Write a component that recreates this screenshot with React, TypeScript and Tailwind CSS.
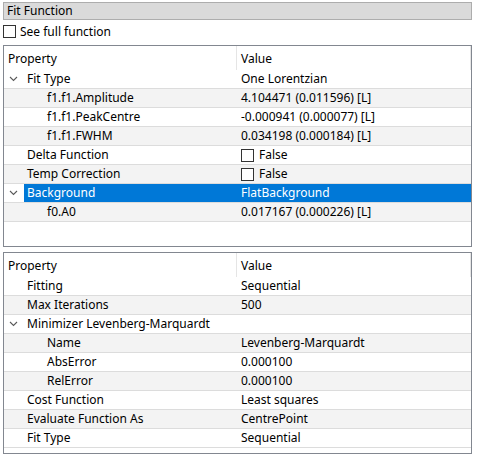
import React from "react";

type Row = {
  label: string;
  value?: string;
  level: number;
  expander?: boolean;
  check?: boolean;
  selected?: boolean;
};

const fitRows: Row[] = [
  { label: "Fit Type", value: "One Lorentzian", level: 0, expander: true },
  { label: "f1.f1.Amplitude", value: "4.104471 (0.011596) [L]", level: 1 },
  { label: "f1.f1.PeakCentre", value: "-0.000941 (0.000077) [L]", level: 1 },
  { label: "f1.f1.FWHM", value: "0.034198 (0.000184) [L]", level: 1 },
  { label: "Delta Function", value: "False", level: 0, check: true },
  { label: "Temp Correction", value: "False", level: 0, check: true },
  { label: "Background", value: "FlatBackground", level: 0, expander: true, selected: true },
  { label: "f0.A0", value: "0.017167 (0.000226) [L]", level: 1 },
];

const settingRows: Row[] = [
  { label: "Fitting", value: "Sequential", level: 0 },
  { label: "Max Iterations", value: "500", level: 0 },
  { label: "Minimizer Levenberg-Marquardt", value: "", level: 0, expander: true },
  { label: "Name", value: "Levenberg-Marquardt", level: 1 },
  { label: "AbsError", value: "0.000100", level: 1 },
  { label: "RelError", value: "0.000100", level: 1 },
  { label: "Cost Function", value: "Least squares", level: 0 },
  { label: "Evaluate Function As", value: "CentrePoint", level: 0 },
  { label: "Fit Type", value: "Sequential", level: 0 },
];

function Chevron() {
  return (
    <svg width="9" height="6" viewBox="0 0 9 6" className="shrink-0">
      <path d="M1 1 L4.5 4.5 L8 1" fill="none" stroke="#5a5a5a" strokeWidth="1.1" />
    </svg>
  );
}

function PropRow({ row, index }: { row: Row; index: number }) {
  const striped = index % 2 === 1;
  const bg = row.selected ? "bg-[#0078d7] text-white" : striped ? "bg-[#f3f3f3]" : "bg-white";
  return (
    <div className="flex h-[19px] border-b border-[#dcdcdc]">
      <div className="flex w-[233px] shrink-0">
        <div className={`flex w-[20px] shrink-0 items-center pl-[5px] ${striped && !row.selected ? "bg-[#f3f3f3]" : "bg-white"}`}>
          {row.expander && <Chevron />}
        </div>
        <div className={`flex flex-1 items-center ${bg} ${row.level === 1 ? "pl-[23px]" : "pl-[3px]"}`}>
          {row.label}
        </div>
      </div>
      <div className={`flex flex-1 items-center pl-[4px] ${bg}`}>
        {row.check && (
          <span className="mr-[5px] h-[13px] w-[13px] border border-[#333333] bg-white" />
        )}
        {row.value}
      </div>
    </div>
  );
}

function PropTable({ rows, className }: { rows: Row[]; className: string }) {
  return (
    <div className={`flex flex-col border border-[#828790] bg-white ${className}`}>
      <div className="flex h-[24px] shrink-0 items-center">
        <div className="flex w-[233px] shrink-0 items-center self-stretch border-r border-[#e5e5e5] pl-[4px] pt-[2px]">
          Property
        </div>
        <div className="flex flex-1 items-center self-stretch border-r border-[#e5e5e5] pl-[4px] pt-[2px]">
          Value
        </div>
      </div>
      {rows.map((r, i) => (
        <PropRow key={r.label + i} row={r} index={i} />
      ))}
    </div>
  );
}

export default function App() {
  return (
    <div
      className="h-[458px] w-[484px] bg-white px-[3px] text-[12px] leading-none text-black"
      style={{ fontFamily: '"Noto Sans", "Liberation Sans", sans-serif' }}
    >
      <div className="w-[469px] pt-[2px]">
        <div className="flex h-[18px] items-center border border-[#adadad] bg-[#dadada] pl-[3px]">
          Fit Function
        </div>
        <div className="mt-[5px] flex h-[13px] items-center">
          <span className="h-[13px] w-[13px] border border-[#333333] bg-white" />
          <span className="ml-[4px]">See full function</span>
        </div>
        <PropTable rows={fitRows} className="mt-[7px] h-[202px]" />
        <PropTable rows={settingRows} className="mt-[5px] h-[202px]" />
      </div>
    </div>
  );
}
